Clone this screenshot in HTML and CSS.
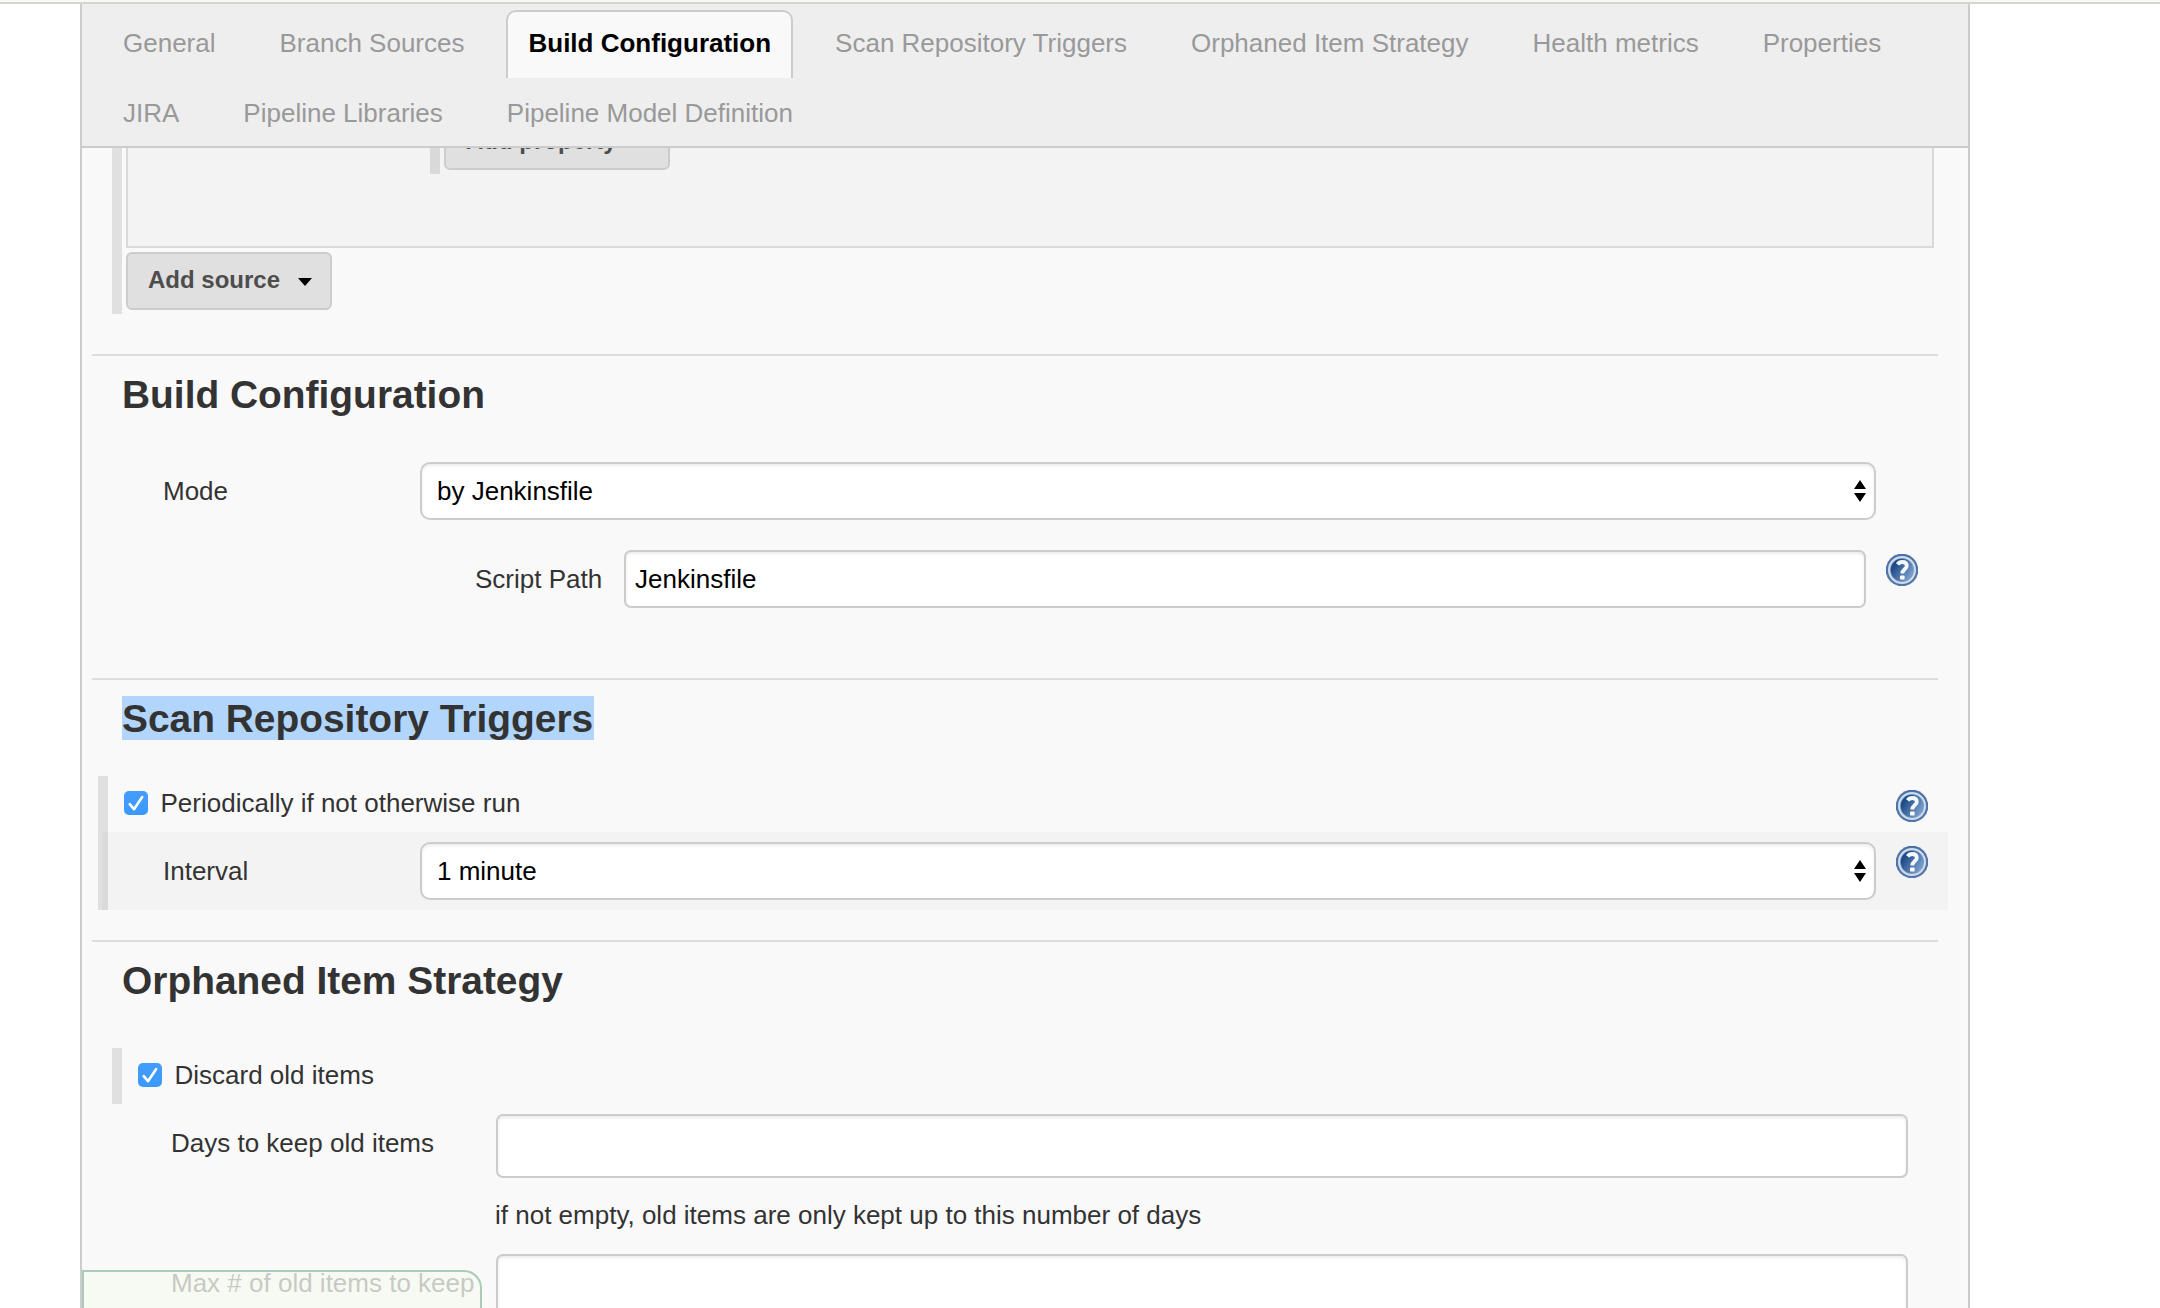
FILE: index.html
```html
<!DOCTYPE html>
<html lang="en">
<head>
<meta charset="utf-8">
<title>Build Configuration</title>
<link rel="stylesheet" href="styles.css">
</head>
<body>
<svg class="defs" width="0" height="0" aria-hidden="true">
  <defs>
    <linearGradient id="help-fill" x1="0" y1="0.2" x2="1" y2="0.85">
      <stop offset="0.15" stop-color="#204a87"/>
      <stop offset="1" stop-color="#84aad4"/>
    </linearGradient>
    <linearGradient id="help-rim" x1="0" y1="0" x2="0" y2="1">
      <stop offset="0" stop-color="#4b71a8"/>
      <stop offset="1" stop-color="#5278ab"/>
    </linearGradient>
    <symbol id="help" viewBox="0 0 32 32">
      <circle cx="16" cy="16" r="16.3" fill="url(#help-rim)"/>
      <circle cx="16" cy="16" r="13" fill="#7e9cc6" stroke="#d0dcea" stroke-width="2"/>
      <circle cx="16" cy="16" r="11.2" fill="url(#help-fill)"/>
      <path d="M11.600 10.400C12.800 8.600 14.300 8 16.200 8c2.800 0 4.600 1.400 4.600 3.700 0 3.300-4.500 3.900-4.500 7.700" fill="none" stroke="#f4f7fb" stroke-width="3.800"/>
      <rect x="14" y="21.600" width="4.600" height="4" rx="1" fill="#fff"/>
    </symbol>
    <symbol id="check" viewBox="0 0 24 24">
      <path d="M5.700 13.200 10 18.200 18.200 6" fill="none" stroke="#fff" stroke-width="2.600" stroke-linecap="round" stroke-linejoin="round"/>
    </symbol>
    <symbol id="updown" viewBox="0 0 12 22">
      <path d="M0 9 6 0l6 9zM0 13h12l-6 9z" fill="#000"/>
    </symbol>
  </defs>
</svg>
<div class="crumb-edge"></div>
<main class="panel">
  <nav class="tabs">
    <div class="tab-row">
      <a class="tab">General</a>
      <a class="tab">Branch Sources</a>
      <a class="tab active">Build Configuration</a>
      <a class="tab">Scan Repository Triggers</a>
      <a class="tab">Orphaned Item Strategy</a>
      <a class="tab">Health metrics</a>
      <a class="tab">Properties</a>
    </div>
    <div class="tab-row">
      <a class="tab">JIRA</a>
      <a class="tab">Pipeline Libraries</a>
      <a class="tab">Pipeline Model Definition</a>
    </div>
  </nav>

  <div class="sources">
    <div class="bar"></div>
    <div class="sources-body">
      <div class="source-box">
        <div class="inner-bar"></div>
        <button class="menu-button">Add property<span class="caret"></span></button>
      </div>
      <button class="menu-button">Add source<span class="caret"></span></button>
    </div>
  </div>

  <section class="section build">
    <h2>Build Configuration</h2>
    <div class="row mode">
      <label>Mode</label>
      <div class="select"><select><option>by Jenkinsfile</option></select><svg><use href="#updown"/></svg></div>
    </div>
    <div class="row script">
      <label>Script Path</label>
      <input class="text" type="text" value="Jenkinsfile">
      <svg class="help"><use href="#help"/></svg>
    </div>
  </section>

  <section class="section scan">
    <h2><span class="selected">Scan Repository Triggers</span></h2>
    <div class="trigger">
      <div class="check-row">
        <svg class="checkbox"><use href="#check"/></svg>
        <label>Periodically if not otherwise run</label>
        <svg class="help"><use href="#help"/></svg>
      </div>
      <div class="row interval">
        <label>Interval</label>
        <div class="select"><select><option>1 minute</option></select><svg><use href="#updown"/></svg></div>
        <svg class="help"><use href="#help"/></svg>
      </div>
    </div>
  </section>

  <section class="section orphan">
    <h2>Orphaned Item Strategy</h2>
    <div class="check-row discard">
      <svg class="checkbox"><use href="#check"/></svg>
      <label>Discard old items</label>
    </div>
    <div class="row keep">
      <label>Days to keep old items</label>
      <input class="text tall" type="text">
    </div>
    <p class="hint">if not empty, old items are only kept up to this number of days</p>
    <div class="row keep">
      <label>Max # of old items to keep</label>
      <input class="text tall" type="text">
    </div>
  </section>
  <div class="save-bar"></div>
</main>
</body>
</html>
```
FILE: styles.css
```css
* { box-sizing: border-box; }

body {
  margin: 0;
  height: 1308px;
  overflow: hidden;
  background: #fff;
  color: #333;
  font: 26px/58px "Liberation Sans", Arial, sans-serif;
}

.defs { position: absolute; }

.crumb-edge {
  height: 4px;
  background: #f6faf2;
  border-bottom: 2px solid #d3d7cf;
}

.panel {
  position: relative;
  width: 1890px;
  height: 1304px;
  margin-left: 80px;
  overflow: hidden;
  background: #f9f9f9;
  border: solid #ccc;
  border-width: 0 2px;
}

/* Tabs */
.tabs {
  display: flex;
  flex-direction: column;
  gap: 2px;
  height: 144px;
  padding: 6px 0 0 19px;
  overflow: hidden;
  background: #eee;
  border-bottom: 2px solid #ccc;
}

.tab-row { display: flex; gap: 20px; }

.tab {
  flex: none;
  height: 68px;
  padding: 0 20px;
  border: 2px solid transparent;
  border-bottom: 0;
  color: #999;
  line-height: 62px;
  white-space: nowrap;
}

.tab.active {
  background: #f9f9f9;
  border-color: #ccc;
  border-radius: 10px 10px 0 0;
  color: #000;
  font-weight: bold;
}

/* Branch sources */
.sources { display: flex; gap: 4px; height: 206px; padding-left: 30px; }

.bar { width: 10px; height: 166px; background: #e0e0e0; }

.sources-body {
  display: flex;
  flex-direction: column;
  align-items: flex-start;
  gap: 4px;
}

.source-box {
  display: flex;
  align-items: flex-start;
  gap: 4px;
  width: 1808px;
  height: 100px;
  padding-left: 302px;
  overflow: hidden;
  background: #f3f3f3;
  border: 2px solid #d9d9d9;
  border-top: 0;
}

.inner-bar { width: 10px; height: 26px; background: #d9d9d9; }

.menu-button {
  display: flex;
  align-items: center;
  gap: 18px;
  height: 58px;
  padding: 0 18px 2px 20px;
  background: #e0e0e0;
  border: 2px solid #ccc;
  border-radius: 6px;
  color: #4d4d4d;
  font: bold 24px/52px "Liberation Sans", Arial, sans-serif;
}

.source-box .menu-button {
  margin-top: -36px;
  padding-right: 19px;
  padding-bottom: 0;
}

.caret {
  margin-top: 4px;
  border: solid transparent;
  border-width: 8px 7.5px 0;
  border-top-color: #000;
}

/* Form sections */
.section {
  margin: 0 30px 0 10px;
  padding-top: 16px;
  border-top: 2px solid #ddd;
}

h2 {
  height: 44px;
  margin: 0;
  padding-left: 30px;
  font-size: 38.9px;
  line-height: 46px;
}

.selected {
  display: inline-block;
  height: 44px;
  padding-right: 1px;
  background: #b2d5fc;
}

.row { display: flex; }

.row label { flex: none; white-space: nowrap; }

.text, .select { height: 58px; border: 2px solid #ccc; background: #fff; }

.text {
  border-radius: 7px;
  padding: 0 9px;
  color: #000;
  font: inherit;
  box-shadow: inset 0 2px 3px rgba(0, 0, 0, .08);
}

.text.tall { width: 1412px; height: 64px; }

.select {
  display: flex;
  align-items: center;
  width: 1456px;
  padding-right: 8px;
  border-radius: 10px;
  box-shadow: inset 0 2px 3px rgba(0, 0, 0, .08);
}

.select select {
  flex: 1;
  height: 54px;
  padding: 0 15px 1px;
  appearance: none;
  border: 0;
  background: none;
  color: #000;
  font: inherit;
  line-height: 30px;
}

.select svg { width: 12px; height: 22px; }

.help { flex: none; width: 32px; height: 32px; }

.build { height: 324px; }
.mode { margin-top: 46px; padding-left: 71px; }
.mode label, .interval label { width: 257px; }

.script { margin-top: 30px; padding-left: 383px; }
.script label { width: 149px; }
.script .text { width: 1242px; }
.script .help { margin: 4px 0 0 20px; }

.scan { height: 262px; }

.trigger {
  margin: 36px -10px 0 6px;
  background: linear-gradient(#e0e0e0, #e0e0e0) 0 0 / 10px 100% no-repeat;
}

.check-row { display: flex; height: 56px; padding-left: 26px; line-height: 54px; }
.check-row label { margin-left: 12.5px; }
.check-row .help { margin: 14px 20px 0 auto; }

.checkbox {
  flex: none;
  width: 24px;
  height: 24px;
  margin-top: 15px;
  border-radius: 5px;
  background: linear-gradient(#439dfc, #3b99fc);
}

.interval {
  height: 78px;
  margin-left: 4px;
  padding: 10px 0 0 61px;
  background: rgba(0, 0, 0, .025);
}

.interval .help { margin: 4px 0 0 20px; }

.discard {
  margin: 46px 0 10px 20px;
  background: linear-gradient(#e0e0e0, #e0e0e0) 0 0 / 10px 100% no-repeat;
}

.keep { padding-left: 79px; }
.keep label { width: 325px; }

.hint { margin: 22px 0 24px 403px; line-height: 30px; }

.save-bar {
  position: absolute;
  left: 0;
  top: 1266px;
  width: 400px;
  height: 60px;
  border: 2px solid #aacbb9;
  border-radius: 0 18px 0 0;
  background: rgba(246, 249, 240, .76);
}
```
